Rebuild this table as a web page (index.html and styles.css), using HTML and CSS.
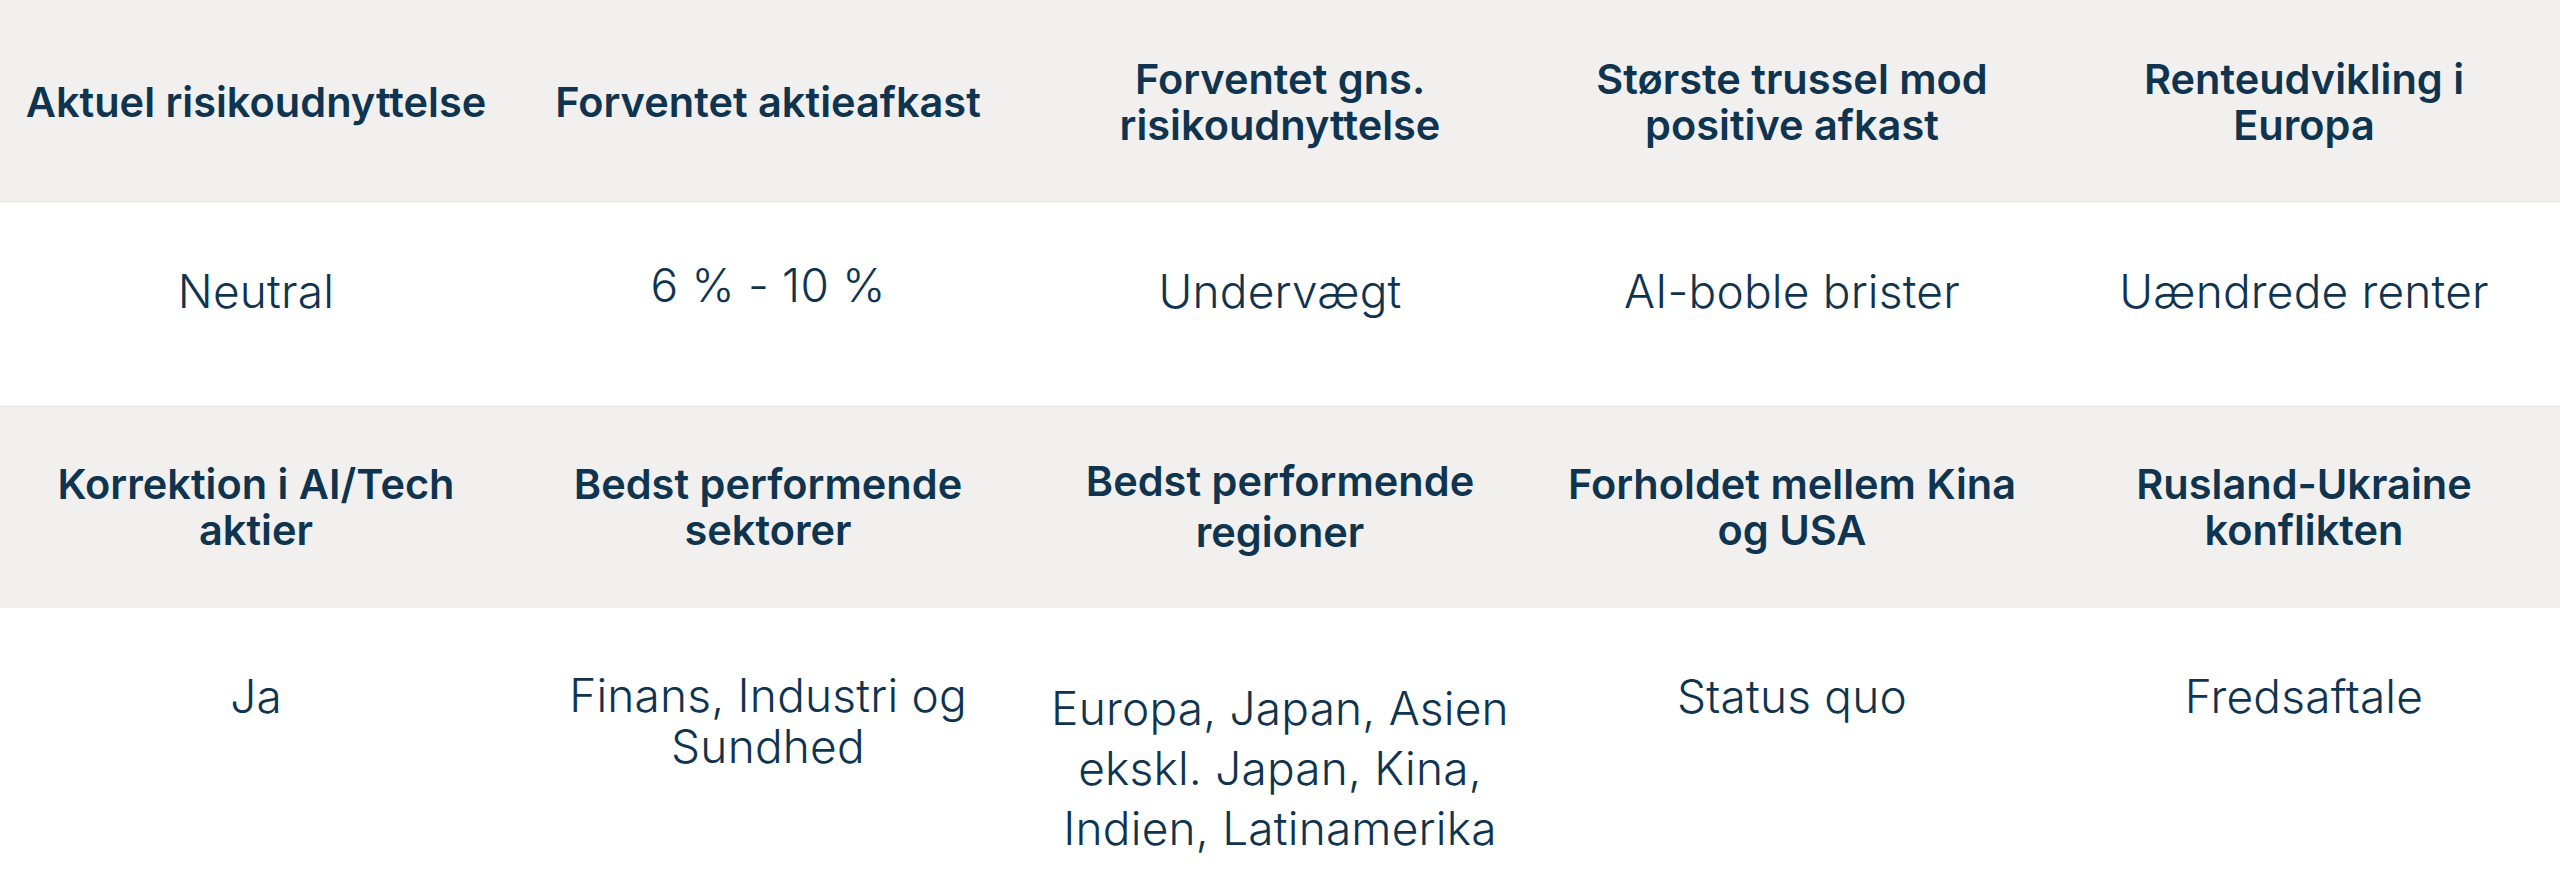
FILE: index.html
```html
<!DOCTYPE html>
<html lang="da">
<head>
<meta charset="utf-8">
<title>Markedsforventninger</title>
<link rel="stylesheet" href="styles.css">
</head>
<body>
<div class="table">
  <div class="row head">
    <div class="cell">Aktuel risikoudnyttelse</div>
    <div class="cell">Forventet aktieafkast</div>
    <div class="cell">Forventet gns.<br>risikoudnyttelse</div>
    <div class="cell">Største trussel mod<br>positive afkast</div>
    <div class="cell">Renteudvikling i<br>Europa</div>
  </div>
  <div class="row vals">
    <div class="cell">Neutral</div>
    <div class="cell raised">6 % - 10 %</div>
    <div class="cell">Undervægt</div>
    <div class="cell">AI-boble brister</div>
    <div class="cell">Uændrede renter</div>
  </div>
  <div class="row head">
    <div class="cell">Korrektion i AI/Tech<br>aktier</div>
    <div class="cell">Bedst performende<br>sektorer</div>
    <div class="cell loose">Bedst performende<br>regioner</div>
    <div class="cell">Forholdet mellem Kina<br>og USA</div>
    <div class="cell">Rusland-Ukraine<br>konflikten</div>
  </div>
  <div class="row vals last">
    <div class="cell">Ja</div>
    <div class="cell tight">Finans, Industri og<br>Sundhed</div>
    <div class="cell lowered">Europa, Japan, Asien<br>ekskl. Japan, Kina,<br>Indien, Latinamerika</div>
    <div class="cell">Status quo</div>
    <div class="cell">Fredsaftale</div>
  </div>
</div>
</body>
</html>
```

FILE: styles.css
```css
html, body {
  margin: 0;
  padding: 0;
  background: #ffffff;
}

body {
  font-family: Inter, "Noto Sans", "Liberation Sans", sans-serif;
  color: #0f3450;
}

.table {
  width: 2560px;
}

.row {
  display: grid;
  grid-template-columns: repeat(5, 1fr);
}

.cell {
  text-align: center;
  padding: 0 20px;
}

.head {
  background: #f2f0ee;
  height: 203px;
  align-items: center;
  font-weight: 600;
  font-size: 41.5px;
  line-height: 46px;
}

.head .loose {
  line-height: 51px;
}

.vals {
  align-items: start;
  padding: 58px 0 84px;
  font-weight: 300;
  font-size: 46px;
  letter-spacing: 0.2px;
  line-height: 60px;
}

.vals.last {
  padding-bottom: 24px;
}

.vals .raised {
  margin-top: -6px;
}

.vals .lowered {
  margin-top: 12px;
}

.vals .tight {
  line-height: 51px;
  margin-top: 4px;
}
```
